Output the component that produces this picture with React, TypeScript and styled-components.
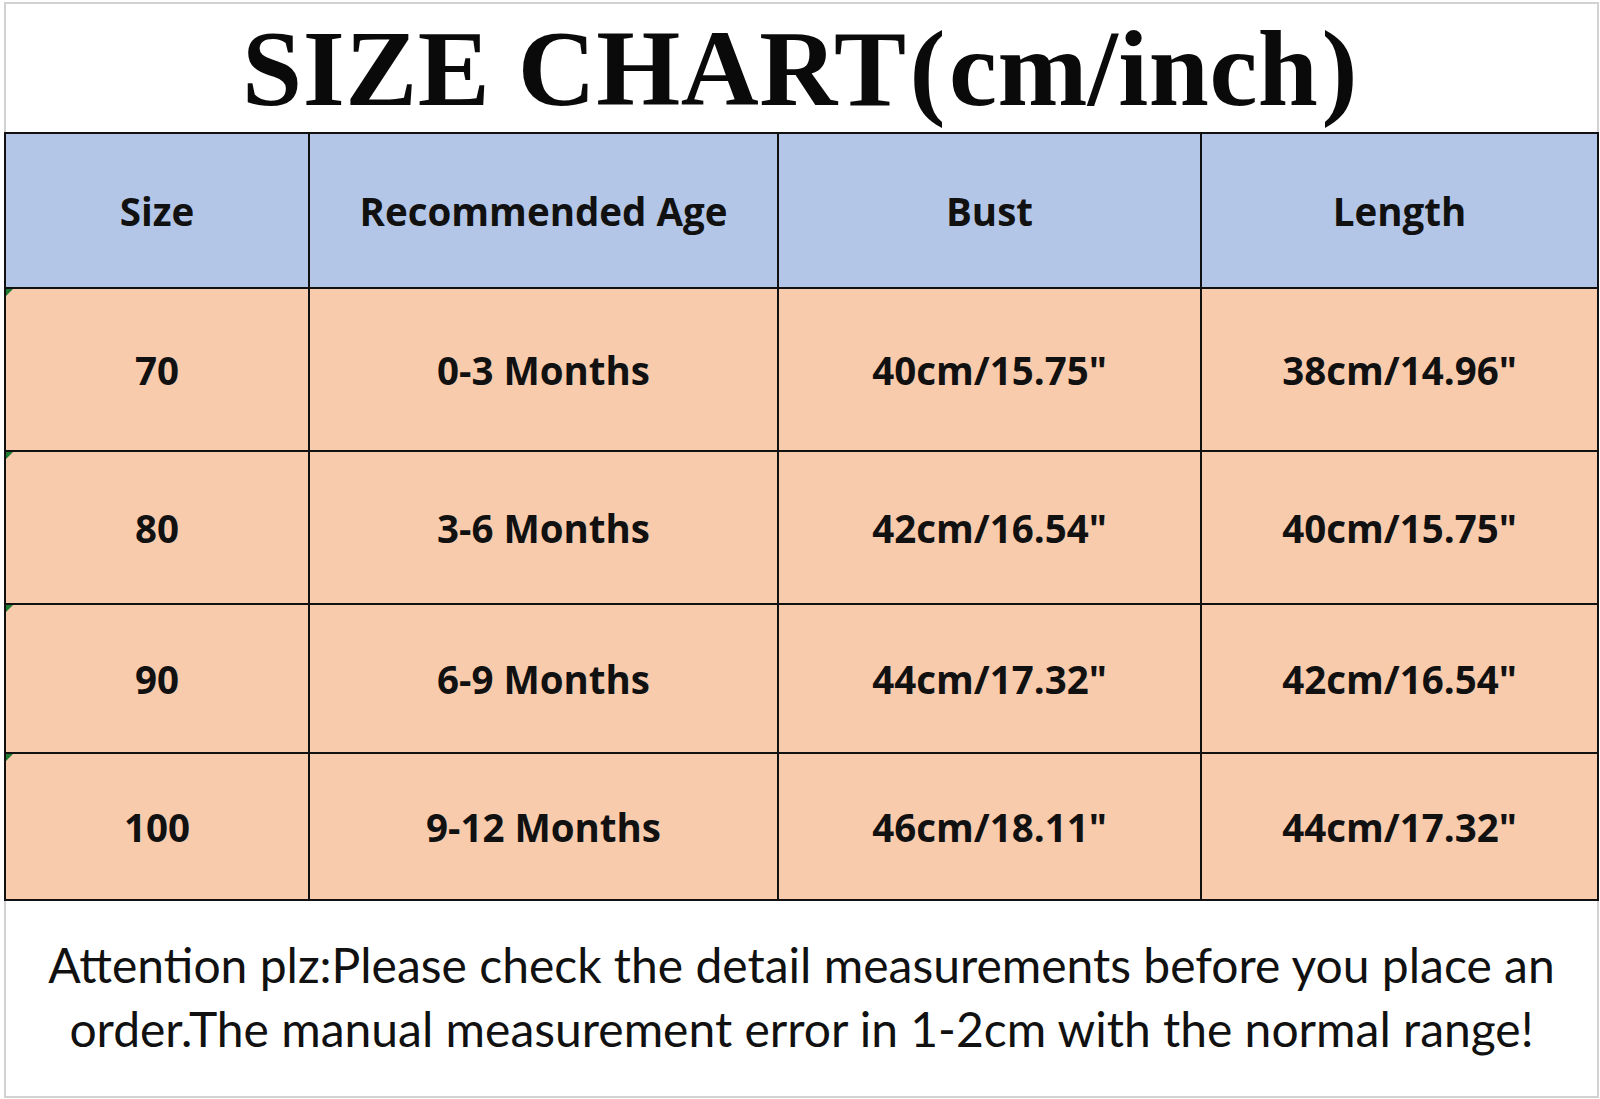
import React from "react";
import styled, { createGlobalStyle } from "styled-components";

const GlobalStyle = createGlobalStyle`
  html, body {
    margin: 0;
    padding: 0;
    background: #ffffff;
  }
`;

const Sheet = styled.div`
  width: 1600px;
  height: 1099px;
  box-sizing: border-box;
  padding: 2px 1px 0 4px;
  display: flex;
  flex-direction: column;
  background: #ffffff;
`;

const TitleBlock = styled.div`
  height: 130px;
  box-sizing: border-box;
  border: 2px solid #d2d2d2;
  border-bottom: none;
  padding-top: 11px;
  text-align: center;
`;

const Title = styled.h1`
  margin: 0;
  font-family: "Liberation Serif", "Times New Roman", serif;
  font-weight: 700;
  font-size: 108px;
  line-height: 1;
  color: #0a0a0a;
  letter-spacing: 0.5px;
`;

const Paren = styled.span`
  margin: 0 3px;
`;

const Grid = styled.div`
  display: grid;
  grid-template-columns: 302px 467px 421px 395px;
  grid-template-rows: 153px 161px 151px 147px 145px;
  gap: 2px;
  padding: 2px;
  background: #111111;
`;

const Cell = styled.div<{ $head?: boolean; $mark?: boolean }>`
  position: relative;
  display: flex;
  align-items: center;
  justify-content: center;
  background: ${(p) => (p.$head ? "#b4c6e7" : "#f8cbad")};
  font-family: "Open Sans", "Noto Sans", sans-serif;
  font-weight: 700;
  font-size: 38.5px;
  color: #111111;

  &::before {
    content: "";
    display: ${(p) => (p.$mark ? "block" : "none")};
    position: absolute;
    top: 0;
    left: 0;
    border-top: 7px solid #1f7a34;
    border-right: 7px solid transparent;
  }
`;

const Note = styled.div`
  flex: 1;
  margin-bottom: 1px;
  box-sizing: border-box;
  border: 2px solid #d2d2d2;
  border-top: none;
  padding-top: 32px;
  text-align: center;
  font-family: "Lato", "Noto Sans", sans-serif;
  font-size: 48px;
  line-height: 64px;
  color: #111111;
`;

const header = ["Size", "Recommended Age", "Bust", "Length"];

const rows = [
  ["70", "0-3 Months", "40cm/15.75\"", "38cm/14.96\""],
  ["80", "3-6 Months", "42cm/16.54\"", "40cm/15.75\""],
  ["90", "6-9 Months", "44cm/17.32\"", "42cm/16.54\""],
  ["100", "9-12 Months", "46cm/18.11\"", "44cm/17.32\""],
];

export default function App() {
  return (
    <>
      <GlobalStyle />
      <Sheet>
        <TitleBlock>
          <Title>
            SIZE CHART<Paren>(</Paren>cm/inch<Paren>)</Paren>
          </Title>
        </TitleBlock>
        <Grid>
          {header.map((h) => (
            <Cell key={h} $head>
              {h}
            </Cell>
          ))}
          {rows.map((r) =>
            r.map((v, i) => (
              <Cell key={r[0] + i} $mark={i === 0}>
                {v}
              </Cell>
            ))
          )}
        </Grid>
        <Note>
          Attention plz:Please check the detail measurements before you place an
          <br />
          order.The manual measurement error in 1-2cm with the normal range!
        </Note>
      </Sheet>
    </>
  );
}
